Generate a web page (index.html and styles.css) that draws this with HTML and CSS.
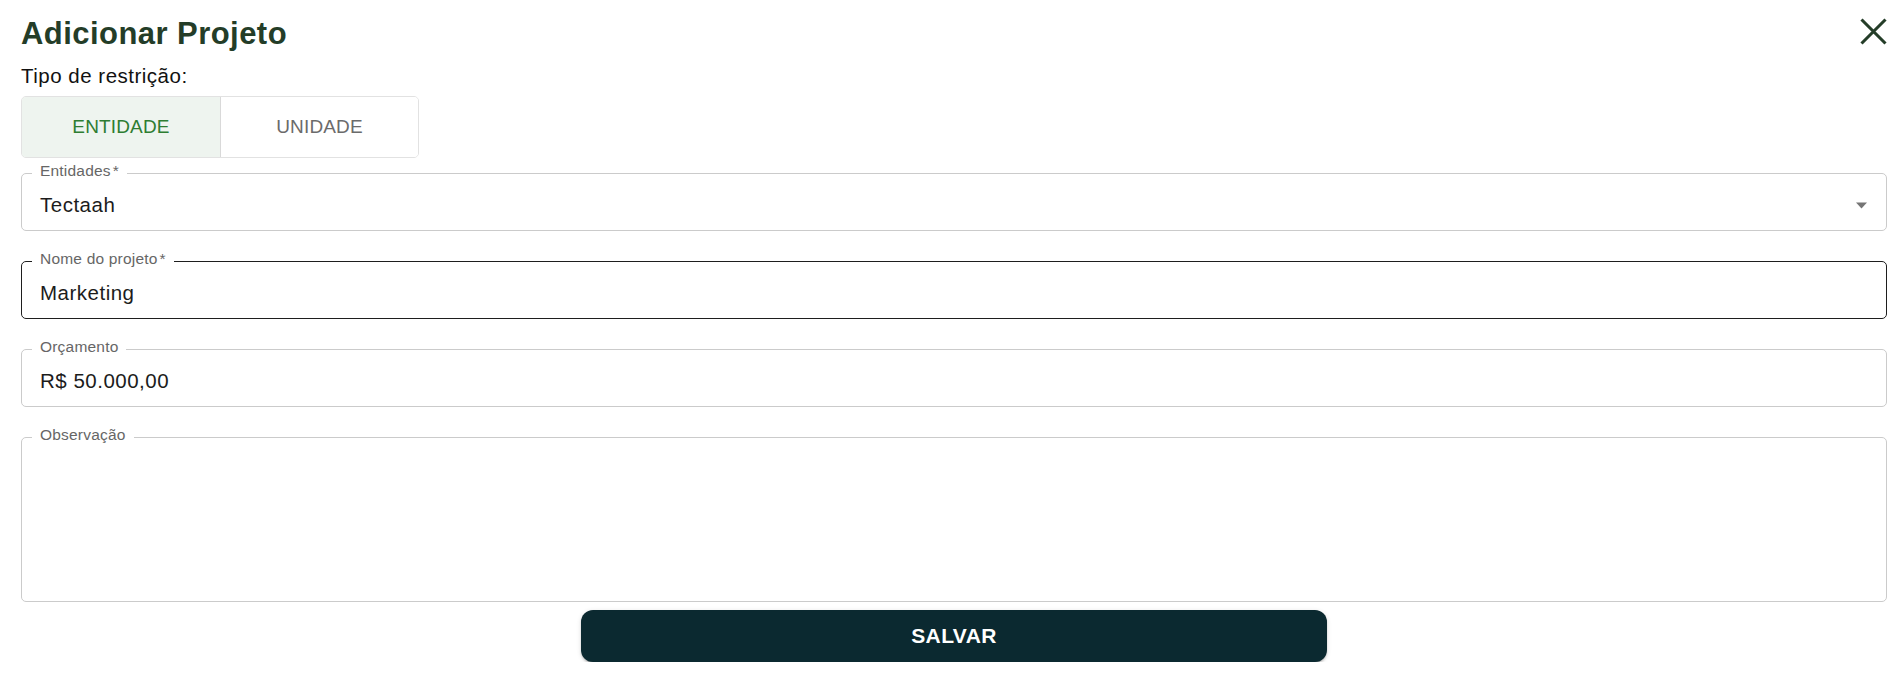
FILE: index.html
```html
<!DOCTYPE html>
<html lang="pt-BR">
<head>
<meta charset="utf-8">
<title>Adicionar Projeto</title>
<link rel="stylesheet" href="styles.css">
</head>
<body>
<div class="dialog">
  <div class="header">
    <h1 class="title">Adicionar Projeto</h1>
    <button class="close" aria-label="Fechar">
      <svg width="27" height="27" viewBox="0 0 27 27"><path d="M1.5 1.5 L25.5 25.5 M25.5 1.5 L1.5 25.5" stroke="#243d28" stroke-width="3.1" fill="none"/></svg>
    </button>
  </div>
  <div class="type-label">Tipo de restrição:</div>
  <div class="toggle">
    <div class="toggle-btn selected">ENTIDADE</div>
    <div class="toggle-btn">UNIDADE</div>
  </div>

  <div class="field field-select">
    <span class="label">Entidades<span class="req">*</span></span>
    <div class="value">Tectaah</div>
    <svg class="arrow" width="11" height="7" viewBox="0 0 11 7"><path d="M0 0.5 L11 0.5 L5.5 6.5 Z" fill="#757575"/></svg>
  </div>

  <div class="field field-hover">
    <span class="label">Nome do projeto<span class="req">*</span></span>
    <div class="value">Marketing</div>
  </div>

  <div class="field">
    <span class="label">Orçamento</span>
    <div class="value">R$ 50.000,00</div>
  </div>

  <div class="field field-area">
    <span class="label">Observação</span>
    <div class="value"></div>
  </div>

  <button class="save">SALVAR</button>
</div>
</body>
</html>
```

FILE: styles.css
```css
* { box-sizing: border-box; }
html, body {
  margin: 0;
  padding: 0;
  background: #ffffff;
  font-family: "Liberation Sans", Arial, Helvetica, sans-serif;
}
.dialog {
  padding: 14px 17px 0 21px;
}
.header {
  display: flex;
  justify-content: space-between;
  align-items: flex-start;
  height: 40px;
}
.title {
  margin: 0;
  font-size: 31px;
  line-height: 40px;
  font-weight: 700;
  letter-spacing: 0.45px;
  color: #243d28;
}
.close {
  margin: 4px 0 0 0;
  padding: 0;
  border: 0;
  background: transparent;
  width: 27px;
  height: 27px;
  display: block;
  cursor: pointer;
}
.close svg { display: block; }
.type-label {
  margin-top: 10px;
  font-size: 20.5px;
  line-height: 24px;
  letter-spacing: 0.5px;
  color: #111111;
}
.toggle {
  margin-top: 8px;
  display: flex;
  width: 398px;
  height: 62px;
  border: 1px solid #e2e2e2;
  border-radius: 5px;
  overflow: hidden;
}
.toggle-btn {
  flex: 1;
  display: flex;
  align-items: center;
  justify-content: center;
  font-size: 19px;
  letter-spacing: 0.15px;
  color: #6b6b6b;
  background: #ffffff;
}
.toggle-btn.selected {
  flex: 0 0 199px;
  border-right: 1px solid #d9d9d9;
  background: #eef4ef;
  color: #2e7d32;
}
.field {
  position: relative;
  margin-top: 30px;
  height: 58px;
  border: 1px solid #cbcbcb;
  border-radius: 5px;
  padding: 19px 14px 13px 18px;
  display: flex;
  align-items: center;
}
.field-select { margin-top: 15px; }
.field-hover { border-color: #1e1e1e; }
.field-area {
  height: 165px;
  align-items: flex-start;
}
.label {
  position: absolute;
  top: -12px;
  left: 10px;
  padding: 0 8px;
  background: #ffffff;
  font-size: 15.5px;
  line-height: 18px;
  letter-spacing: 0.2px;
  color: #666666;
  white-space: nowrap;
}
.req { margin-left: 2px; }
.value {
  flex: 1;
  font-size: 20.5px;
  line-height: 24px;
  letter-spacing: 0.5px;
  color: #1c1c1c;
  min-height: 24px;
}
.arrow {
  display: block;
  margin-right: 5px;
  flex: none;
}
.save {
  display: block;
  margin: 8px auto 0;
  width: 40%;
  height: 52px;
  border: 0;
  border-radius: 12px;
  background: #0b2930;
  color: #ffffff;
  font-family: "Liberation Sans", Arial, Helvetica, sans-serif;
  font-size: 21px;
  font-weight: 700;
  letter-spacing: 0.4px;
  box-shadow: 0 3px 1px -2px rgba(0,0,0,0.2), 0 2px 2px 0 rgba(0,0,0,0.14), 0 1px 5px 0 rgba(0,0,0,0.12);
  cursor: pointer;
}
```
